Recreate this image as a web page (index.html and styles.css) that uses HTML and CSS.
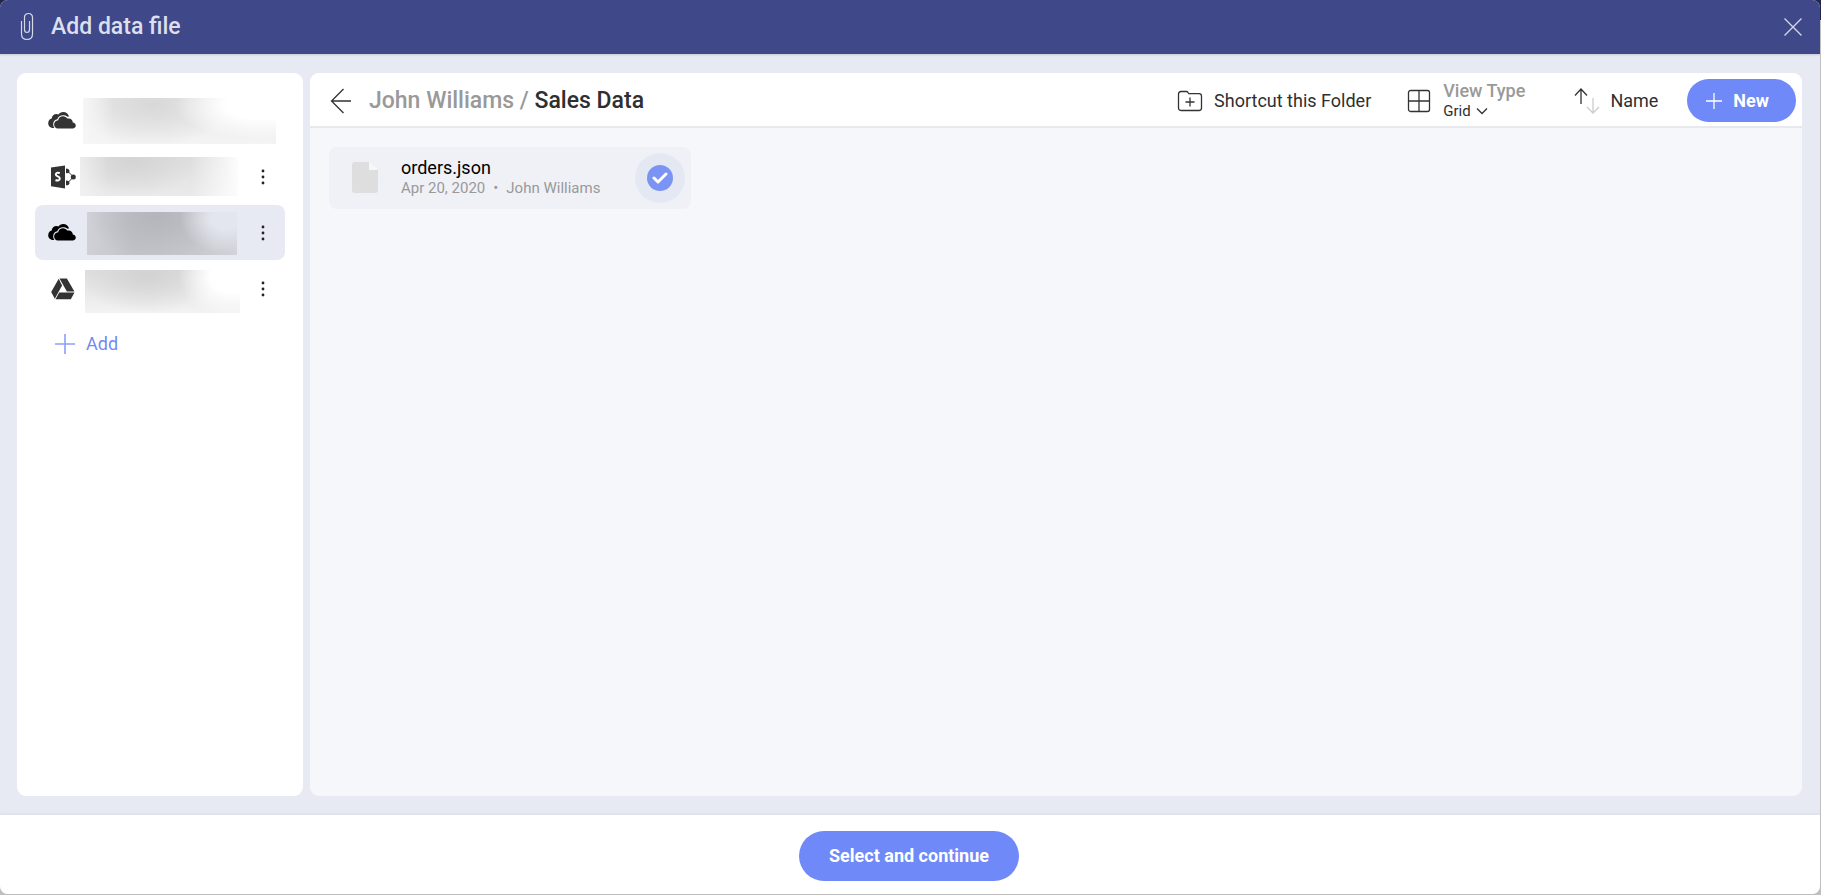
FILE: index.html
```html
<!DOCTYPE html>
<html lang="en">
<head>
<meta charset="utf-8">
<title>Add data file</title>
<link rel="stylesheet" href="styles.css">
</head>
<body>
<svg class="defs" width="0" height="0" aria-hidden="true">
  <symbol id="cloud" viewBox="0 0 28 17">
    <path d="M5.600 16C2.500 15.900.2 14 .2 11.200.2 8.800 1.700 7 3.700 6.600 3.800 3.900 6 2 8.400 2c.8 0 1.500.2 2 .5C11.400.9 13.200 0 15.200 0c2.900 0 5.200 1.900 5.900 4.500-.9 0-1.300.1-1.700.3C18.200 3.700 16.700 3.300 15 3.300c-2.700 0-4.900 1.600-5.700 4C7 7.500 5.200 9.500 5.200 12c0 1.600.4 2.900 1.300 4z"/>
    <path d="M9.800 16.500c-2.100 0-3.700-1.700-3.700-4 0-2.400 1.700-4.200 4.100-4.300.4-2.400 2.400-4 4.800-4 1.900 0 3.400.9 4.300 2.400 3.100-.8 5.600 1.200 5.500 4 1.700.2 3 1.400 3 3 0 1.700-1.300 2.900-3 2.900z"/>
  </symbol>
  <symbol id="dots" viewBox="0 0 4 18">
    <circle cx="2" cy="3" r="1.400"/><circle cx="2" cy="9" r="1.400"/><circle cx="2" cy="15" r="1.400"/>
  </symbol>
</svg>
<div class="dialog">
  <header class="titlebar">
    <svg class="clip" width="14" height="30" viewBox="0 0 14 30"><path d="M1.500 9v13c0 3.500 2.200 5.500 5.500 5.500s5.500-2 5.500-5.500V5.500c0-2.500-1.600-4-4-4s-4 1.500-4 4v12c0 1.900 1 3 2.500 3s2.500-1.100 2.500-3V9"/></svg>
    <h1 class="title">Add data file</h1>
    <button class="plain close" aria-label="Close"><svg width="20" height="20" viewBox="0 0 20 20"><path d="M1.500 1.500l17 17M18.500 1.500l-17 17"/></svg></button>
  </header>
  <div class="body">
    <nav class="sidebar" aria-label="Storage accounts">
      <ul class="accounts">
        <li class="account">
          <svg class="account-icon" width="28" height="17"><use href="#cloud"/></svg>
          <span class="veil veil-wide"></span>
        </li>
        <li class="account">
          <svg class="account-icon" width="28" height="24" viewBox="0 0 28 24">
            <path d="M3 2.500L17 .5v23l-14-2.300z"/>
            <path class="letter" d="M11.800 8.200c-2-1-4-.4-4 1.300 0 2.200 4 1.700 4 4 0 1.900-2.200 2.500-4.300 1.500"/>
            <path class="link" d="M19.500 6l6 6-6 6"/>
            <path d="M18 3.600c2.200 0 3.500 1 3.500 2.700S20 8.600 18 8.100zM18 15.400c2.200-.1 3.500 1 3.500 2.600S20 20.400 18 20.300z"/>
            <circle cx="25.300" cy="12" r="2.500"/>
          </svg>
          <span class="veil veil-short"></span>
          <button class="plain more" aria-label="More options"><svg width="4" height="18"><use href="#dots"/></svg></button>
        </li>
        <li class="account selected">
          <svg class="account-icon" width="28" height="17"><use href="#cloud"/></svg>
          <span class="veil veil-dark"></span>
          <button class="plain more" aria-label="More options"><svg width="4" height="18"><use href="#dots"/></svg></button>
        </li>
        <li class="account">
          <svg class="account-icon" width="28" height="22" viewBox="0 0 28 22">
            <path d="M10.700.8L3.200 14l3.600 6.700 7.300-13.200zM11.500.5h7.400l7.500 13h-7.500zM11.200 14.400h15.300l-3.700 6.800H7.500z"/>
          </svg>
          <span class="veil veil-drive"></span>
          <button class="plain more" aria-label="More options"><svg width="4" height="18"><use href="#dots"/></svg></button>
        </li>
      </ul>
      <button class="plain add"><svg width="20" height="20" viewBox="0 0 20 20"><path d="M10 0v20M0 10h20"/></svg>Add</button>
    </nav>
    <main class="browser">
      <div class="toolbar">
        <button class="plain back" aria-label="Back"><svg width="22" height="26" viewBox="0 0 22 26"><path d="M13.500 1L1.500 13l12 12M1.500 13H21"/></svg></button>
        <div class="crumbs"><a class="crumb" href="#">John Williams</a> <span class="crumb">/</span> <span class="current">Sales Data</span></div>
        <button class="plain tool shortcut">
          <svg width="26" height="22" viewBox="0 0 26 22"><path d="M1.500 4q0-2.500 2.500-2.500h5.500q1 0 1.500 1l.8 1.200H22q2.500 0 2.500 2.300v12q0 2.500-2.500 2.500H4q-2.500 0-2.500-2.500zM13 7.500v9M8.500 12h9"/></svg>
          Shortcut this Folder
        </button>
        <button class="plain tool view">
          <svg width="24" height="24" viewBox="0 0 24 24"><rect x="1.500" y="1.500" width="21" height="21" rx="2"/><path d="M12 1.500v21M1.500 12h21"/></svg>
          <span class="view-text"><span class="view-label">View Type</span><span class="view-value">Grid <svg width="12" height="8" viewBox="0 0 12 8"><path d="M1 1.500l5 5 5-5"/></svg></span></span>
        </button>
        <button class="plain tool sort">
          <svg width="26" height="26" viewBox="0 0 26 26"><path d="M7 16V1M1 7.500l6-6.500 6 6.500"/><path class="faint" d="M19 10v15M13 19l6 6 6-6"/></svg>
          Name
        </button>
        <button class="primary new"><svg width="18" height="18" viewBox="0 0 18 18"><path d="M9 1v16M1 9h16"/></svg>New</button>
      </div>
      <div class="files">
        <label class="file">
          <svg width="26" height="32" viewBox="0 0 26 32"><path class="sheet" d="M3 0h14v8h9v20q0 3-3 3H3q-3 0-3-3V3q0-3 3-3z"/><path class="fold" d="M17 0l9 8h-9z"/></svg>
          <span class="file-text"><span class="file-name">orders.json</span><span class="file-meta">Apr 20, 2020<span class="bullet">•</span>John Williams</span></span>
          <span class="pick"><input class="check" type="checkbox" checked><svg class="tick" width="16" height="12" viewBox="0 0 16 12"><path d="M2 6l4 4 8-8"/></svg></span>
        </label>
      </div>
    </main>
  </div>
  <footer class="footer"><button class="primary continue">Select and continue</button></footer>
</div>
</body>
</html>
```
FILE: styles.css
```css
* { box-sizing: border-box; }
body {
  margin: 0;
  height: 100vh;
  padding: 0 1px 1px 0;
  background: linear-gradient(#23274a 0 20px, #bfbfbf 20px);
  font: 18px/24px Roboto, sans-serif;
  color: #2f2f2f;
}
svg { display: block; flex: none; fill: none; stroke: none; }
.defs { position: absolute; }
.plain, .primary {
  border: 0;
  padding: 0;
  background: none;
  font: inherit;
  color: inherit;
  cursor: pointer;
}
.dialog {
  display: flex;
  flex-direction: column;
  height: 100%;
  border-radius: 8px;
  overflow: hidden;
  background: #e7eaf3;
}
.titlebar {
  display: flex;
  align-items: center;
  height: 54px;
  padding: 0 17px 0 20px;
  background: #3f4989;
  box-shadow: 0 1px 2px rgba(0, 0, 0, .15);
  color: #dcdfec;
}
.clip, .close svg { stroke: #d5d8e8; stroke-width: 1.2; }
.title { flex: 1; margin: 0 0 0 17px; font-size: 23px; line-height: 28px; font-weight: 500; }
.close svg { stroke-width: 1.3; }
.body { flex: 1; display: flex; gap: 7px; padding: 19px 18px 19px 17px; min-height: 0; }
.sidebar { width: 286px; padding: 20px 18px; border-radius: 9px; background: #fff; }
.accounts { display: grid; grid-template-columns: minmax(0, 1fr); gap: 1px; margin: 0; padding: 0; list-style: none; }
.account { display: flex; align-items: center; height: 55px; padding: 0 20px 0 13px; border-radius: 8px; }
.account.selected { background: #e7eaf2; }
.account-icon { fill: #333; }
.selected .account-icon { fill: #000; }
.letter { fill: none; stroke: #fff; stroke-width: 2; }
.link { fill: none; stroke: #333; stroke-width: 1; }
.more { margin-left: auto; }
.more svg { fill: #222; }
.veil { flex: none; }
.veil-wide {
  width: 193px; height: 46px; margin-left: 7px;
  background:
    linear-gradient(90deg, #f6f6f6, transparent 16%),
    radial-gradient(ellipse 45% 75% at 92% 15%, #fff 40%, transparent),
    radial-gradient(ellipse 40% 90% at 36% 15%, #d8d8d8, transparent),
    linear-gradient(#e6e6e6, #f4f4f4);
}
.veil-short {
  width: 158px; height: 39px; margin-left: 4px;
  background:
    linear-gradient(90deg, #f4f4f4aa, transparent 18% 70%, #fcfcfc),
    radial-gradient(ellipse 40% 90% at 34% 10%, #d4d4d4, transparent),
    linear-gradient(#dedede, #eaeaea);
}
.veil-dark {
  width: 150px; height: 43px; margin: 2px 0 0 11px;
  background:
    radial-gradient(ellipse 30% 80% at 92% 15%, #e3e6ee 30%, transparent),
    radial-gradient(ellipse 45% 100% at 47% 10%, #b4b5ba, transparent),
    linear-gradient(90deg, #d0d1d6, #c2c3c8 30%, #c6c7cc 70%, #d2d3d9);
}
.veil-drive {
  width: 155px; height: 43px; margin: 6px 0 0 9px;
  background:
    radial-gradient(ellipse 35% 95% at 95% 15%, #fff 40%, transparent),
    radial-gradient(ellipse 45% 90% at 40% 10%, #d2d2d2, transparent),
    linear-gradient(#dedede, #f3f3f3);
}
.add { display: flex; align-items: center; gap: 11px; height: 55px; padding: 0 20px; color: #728af4; }
.add svg { stroke: #8ba0fa; stroke-width: 1.6; }
.browser { flex: 1; min-width: 0; border-radius: 9px; overflow: hidden; background: #f5f7fb; }
.toolbar {
  display: flex;
  align-items: center;
  height: 55px;
  padding: 0 6px 0 20px;
  box-shadow: inset 0 -2px #e8e9ec;
  background: #fff;
}
.toolbar svg { stroke: #333; stroke-width: 1.3; }
.crumbs { margin: 0 auto 0 17px; font-size: 23px; line-height: 28px; font-weight: 500; }
.crumb { color: #999; text-decoration: none; }
.tool { display: flex; align-items: center; }
.shortcut { gap: 11px; }
.view { gap: 12px; margin-left: 36px; text-align: left; }
.view-text { display: grid; }
.view-label { font-weight: 500; line-height: 20px; color: #999; }
.view-value { display: flex; align-items: center; gap: 5px; font-size: 15px; line-height: 20px; }
.sort { gap: 10px; margin-left: 49px; }
.toolbar .faint { stroke: #ccc; }
.primary { background: #6f89f8; color: #fff; font-weight: 700; }
.new { display: flex; align-items: center; gap: 10px; height: 43px; margin-left: 29px; padding: 0 27px 0 18px; border-radius: 22px; }
.toolbar .new svg { stroke: #fff; }
.files { padding: 19px; }
.file { display: flex; align-items: center; width: 362px; height: 62px; padding: 0 6px 0 23px; border-radius: 8px; background: #f0f1f6; }
.sheet { fill: #dedede; }
.fold { fill: #f7f7f8; }
.file-text { display: grid; flex: 1; margin-left: 23px; }
.file-name { line-height: 20px; color: #000; }
.file-meta { font-size: 15px; line-height: 20px; color: #999; }
.bullet { margin: 0 8px; }
.pick { position: relative; display: grid; place-items: center; width: 50px; height: 50px; border-radius: 50%; background: #e3e8f3; }
.check { appearance: none; width: 26px; height: 26px; margin: 0; border-radius: 50%; background: #7b94f3; }
.tick { position: absolute; stroke: #fff; stroke-width: 3; stroke-linecap: round; stroke-linejoin: round; }
.footer {
  display: flex;
  align-items: center;
  justify-content: center;
  height: 79px;
  padding: 2px 2px 0 0;
  background: #fff;
  box-shadow: 0 -1px 3px rgba(0, 0, 0, .06);
}
.continue { height: 50px; padding: 0 30px; border-radius: 25px; }
```
